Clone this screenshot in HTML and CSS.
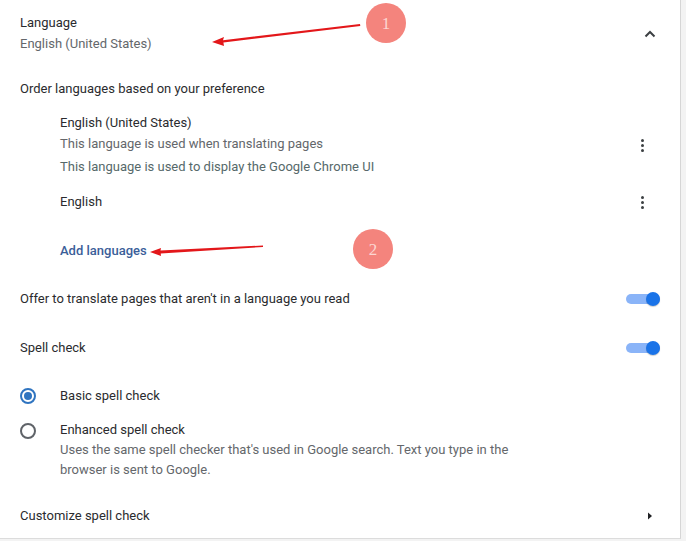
FILE: index.html
```html
<!DOCTYPE html>
<html>
<head>
<meta charset="utf-8">
<link rel="stylesheet" href="styles.css">
</head>
<body>
<div class="card">
  <div class="row header">
    <div class="col">
      <div class="title">Language</div>
      <div class="sub tight">English (United States)</div>
    </div>
    <svg class="chevron" width="20" height="20" viewBox="0 0 20 20"><path d="M5.5 12.5 L10 8 L14.5 12.5" fill="none" stroke="#3c4043" stroke-width="2"/></svg>
  </div>
  <div class="order">Order languages based on your preference</div>
  <div class="lang-list">
    <div class="row lang-item first">
      <div class="col">
        <div class="primary">English (United States)</div>
        <div class="sub tight">This language is used when translating pages</div>
        <div class="sub ui">This language is used to display the Google Chrome UI</div>
      </div>
      <div class="kebab"><span></span><span></span><span></span></div>
    </div>
    <div class="row lang-item second">
      <div class="primary">English</div>
      <div class="kebab"><span></span><span></span><span></span></div>
    </div>
    <div class="add">Add languages</div>
  </div>
  <div class="row setting offer">
    <div class="primary">Offer to translate pages that aren't in a language you read</div>
    <div class="toggle"><span class="knob"></span></div>
  </div>
  <div class="row setting spell">
    <div class="primary">Spell check</div>
    <div class="toggle"><span class="knob"></span></div>
  </div>
  <div class="radio-row basic">
    <span class="radio checked"></span>
    <div class="primary">Basic spell check</div>
  </div>
  <div class="radio-row enhanced">
    <span class="radio"></span>
    <div class="col">
      <div class="primary">Enhanced spell check</div>
      <div class="sub desc">Uses the same spell checker that's used in Google search. Text you type in the browser is sent to Google.</div>
    </div>
  </div>
  <div class="row setting customize">
    <div class="primary">Customize spell check</div>
    <svg class="tri" width="20" height="20" viewBox="0 0 20 20"><path d="M8 6.5 L12 10 L8 13.5 Z" fill="#202124"/></svg>
  </div>
</div>
<svg class="annot" width="686" height="541" viewBox="0 0 686 541">
  <polygon points="212,42 224,37 223,40.2 360,24 360.3,26 223.4,42.5 224,46" fill="#e3171a"/>
  <polygon points="150,252 161,248 160.5,250.6 263,245.5 263,247 160.7,253.4 161,256" fill="#e3171a"/>
  <circle cx="386" cy="23" r="20" fill="#f4847d"/>
  <circle cx="373" cy="249" r="20" fill="#f4847d"/>
  <text x="386" y="29" class="num">1</text>
  <text x="373" y="255" class="num">2</text>
</svg>
</body>
</html>
```
FILE: styles.css
```css
html, body {
  margin: 0;
  padding: 0;
  background: #f3f3f3;
}
body {
  width: 686px;
  height: 541px;
  overflow: hidden;
  position: relative;
  font-family: Roboto, "Liberation Sans", sans-serif;
  font-size: 13px;
  line-height: 20px;
  color: #2a2b2e;
}
.card {
  width: 640px;
  height: 525px;
  padding: 13px 20px 0 20px;
  background: #fff;
  border-right: 1px solid #d6d6d6;
  border-bottom: 1px solid #dcdcdc;
  border-top: 2px solid #efefef;
  margin-top: -2px;
  box-sizing: content-box;
}
.row {
  display: flex;
  align-items: center;
  justify-content: space-between;
}
.col {
  display: flex;
  flex-direction: column;
}
.sub {
  color: #64676b;
}
.tight {
  margin-top: 1px;
}
.ui {
  margin-top: 3px;
  color: #56696a;
}
.chevron {
  display: block;
}
.order {
  margin-top: 25px;
}
.lang-list {
  padding-left: 40px;
}
.lang-item.first {
  margin-top: 14px;
}
.lang-item.second {
  margin-top: 15px;
}
.kebab {
  width: 36px;
  height: 20px;
  display: flex;
  flex-direction: column;
  align-items: center;
  justify-content: center;
  gap: 2px;
}
.kebab span {
  width: 3px;
  height: 3px;
  border-radius: 50%;
  background: #3c4043;
}
.add {
  margin-top: 29px;
  color: #3b5e99;
  font-weight: 500;
}
.offer {
  margin-top: 28px;
}
.spell {
  margin-top: 29px;
}
.toggle {
  width: 34px;
  height: 10px;
  border-radius: 5px;
  background: #8ab4f8;
  position: relative;
  display: flex;
  justify-content: flex-end;
  align-items: center;
}
.knob {
  width: 14px;
  height: 14px;
  border-radius: 50%;
  background: #1a73e8;
  box-shadow: 0 1px 1px rgba(0,0,0,0.2);
}
.radio-row {
  display: flex;
  align-items: flex-start;
  gap: 24px;
}
.radio-row.basic {
  margin-top: 28px;
}
.radio-row.enhanced {
  margin-top: 14px;
}
.radio {
  flex: none;
  width: 16px;
  height: 16px;
  margin-top: 2px;
  box-sizing: border-box;
  border: 2px solid #5f6368;
  border-radius: 50%;
  display: flex;
  align-items: center;
  justify-content: center;
}
.radio.checked {
  border-color: #2f74c0;
}
.radio.checked::after {
  content: "";
  width: 8px;
  height: 8px;
  border-radius: 50%;
  background: #2f74c0;
}
.enhanced .radio {
  margin-top: 3px;
}
.desc {
  max-width: 470px;
}
.customize {
  margin-top: 26px;
}
.tri {
  display: block;
}
.annot {
  position: absolute;
  left: 0;
  top: 0;
}
.num {
  font-family: "Liberation Serif", serif;
  font-size: 17px;
  fill: #fcd6d2;
  text-anchor: middle;
}
```
